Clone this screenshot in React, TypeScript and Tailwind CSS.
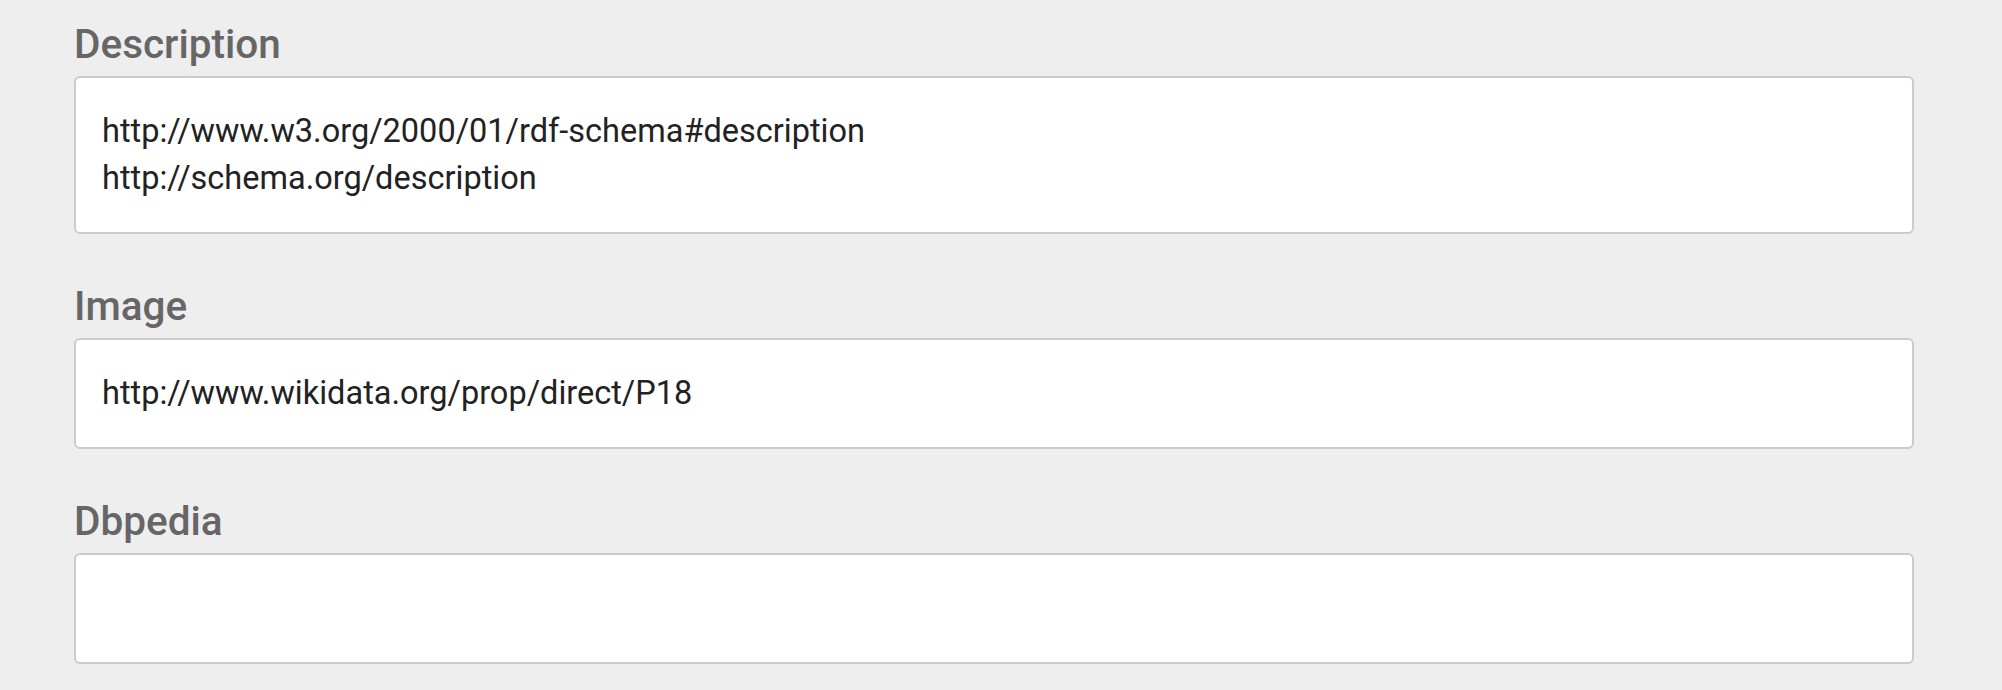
const FIELDS = [
  {
    label: "Description",
    values: ["http://www.w3.org/2000/01/rdf-schema#description", "http://schema.org/description"],
  },
  { label: "Image", values: ["http://www.wikidata.org/prop/direct/P18"] },
  { label: "Dbpedia", values: [] as string[] },
];

export default function App() {
  return (
    <div
      className="min-h-screen bg-[#eeeeee] pt-[20px] pl-[74px] pr-[88px]"
      style={{ fontFamily: "Roboto, 'Liberation Sans', sans-serif" }}
    >
      <div className="flex flex-col gap-[48px]">
        {FIELDS.map((field) => (
          <div key={field.label}>
            <div className="text-[40.5px] leading-[48px] font-medium text-[#666666] mb-[8px]">{field.label}</div>
            <div className="bg-white border-2 border-[#cbcbcb] rounded-[6px] px-[26px] py-[30px] min-h-[111px] text-[32.5px] leading-[47px] text-[#222222]">
              {field.values.map((v) => (
                <div key={v}>{v}</div>
              ))}
            </div>
          </div>
        ))}
      </div>
    </div>
  );
}
